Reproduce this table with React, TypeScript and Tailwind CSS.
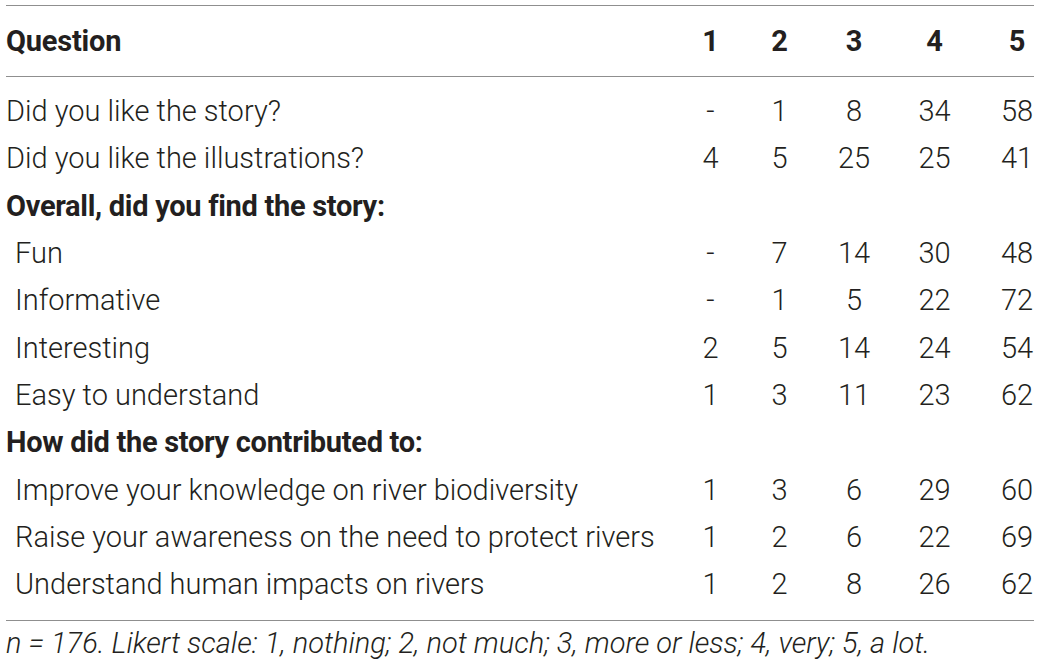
import React from "react";

type Row =
  | { kind: "data"; label: string; indent?: boolean; vals: string[] }
  | { kind: "section"; label: string };

const rows: Row[] = [
  { kind: "data", label: "Did you like the story?", vals: ["-", "1", "8", "34", "58"] },
  { kind: "data", label: "Did you like the illustrations?", vals: ["4", "5", "25", "25", "41"] },
  { kind: "section", label: "Overall, did you find the story:" },
  { kind: "data", label: "Fun", indent: true, vals: ["-", "7", "14", "30", "48"] },
  { kind: "data", label: "Informative", indent: true, vals: ["-", "1", "5", "22", "72"] },
  { kind: "data", label: "Interesting", indent: true, vals: ["2", "5", "14", "24", "54"] },
  { kind: "data", label: "Easy to understand", indent: true, vals: ["1", "3", "11", "23", "62"] },
  { kind: "section", label: "How did the story contributed to:" },
  { kind: "data", label: "Improve your knowledge on river biodiversity", indent: true, vals: ["1", "3", "6", "29", "60"] },
  { kind: "data", label: "Raise your awareness on the need to protect rivers", indent: true, vals: ["1", "2", "6", "22", "69"] },
  { kind: "data", label: "Understand human impacts on rivers", indent: true, vals: ["1", "2", "8", "26", "62"] },
];

const grid = "grid grid-cols-[minmax(0,1fr)_67px_71px_78px_83px_58px] items-center";

export default function App() {
  return (
    <div
      className="w-[1040px] h-[670px] bg-white text-[#231f20] overflow-hidden"
      style={{ fontFamily: "Roboto, 'Liberation Sans', sans-serif" }}
    >
      <div className="mx-[6px] pt-[5px]">
        <div className="h-px bg-[#8f8f8f]" />
        <div className={`${grid} h-[70px] text-[29px] font-bold leading-none tracking-[-0.2px]`}>
          <div>Question</div>
          <div className="text-center">1</div>
          <div className="text-center">2</div>
          <div className="text-center">3</div>
          <div className="text-center">4</div>
          <div className="text-center pl-[24px]">5</div>
        </div>
        <div className="h-px bg-[#8f8f8f]" />
        <div className="pt-[11px] pb-[12px]">
          {rows.map((r, i) =>
            r.kind === "section" ? (
              <div key={i} className="h-[47.3px] flex items-center text-[29px] font-bold leading-none tracking-[-0.3px]">
                {r.label}
              </div>
            ) : (
              <div key={i} className={`${grid} h-[47.3px] text-[29px] font-light leading-none`}>
                <div className={r.indent ? "pl-[9px]" : ""}>{r.label}</div>
                {r.vals.map((v, j) => (
                  <div key={j} className={j === 4 ? "text-center pl-[24px]" : "text-center"}>
                    {v}
                  </div>
                ))}
              </div>
            )
          )}
        </div>
        <div className="h-px bg-[#8f8f8f]" />
        <div className="pt-[8px] text-[29px] font-light italic leading-none">
          n = 176. Likert scale: 1, nothing; 2, not much; 3, more or less; 4, very; 5, a lot.
        </div>
      </div>
    </div>
  );
}
